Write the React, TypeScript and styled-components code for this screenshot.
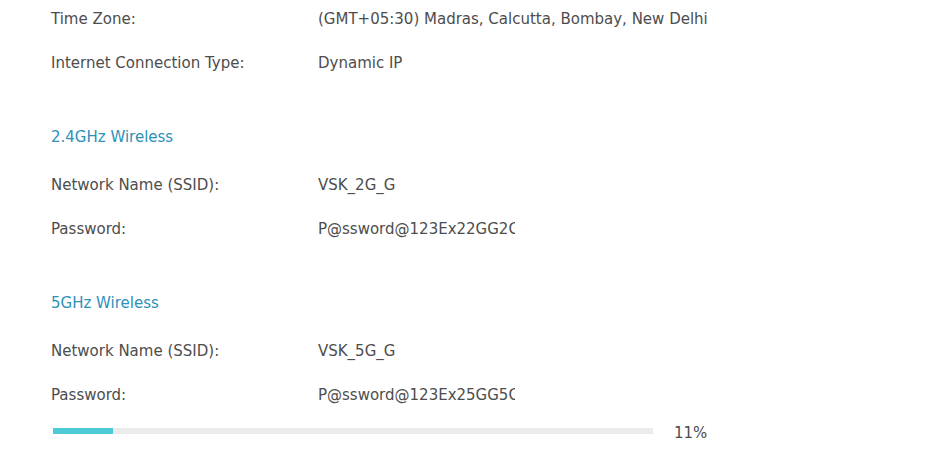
import React from 'react';
import styled, { createGlobalStyle } from 'styled-components';

const GlobalStyle = createGlobalStyle`
  html, body {
    margin: 0;
    padding: 0;
    background: #ffffff;
  }
  body {
    font-family: "DejaVu Sans", Verdana, sans-serif;
    font-size: 15px;
    color: #4d4d4d;
  }
`;

const Page = styled.div`
  width: 937px;
  height: 470px;
  overflow: hidden;
  display: flex;
  flex-direction: column;
  padding: 8px 0 0 51px;
  box-sizing: border-box;
`;

const Section = styled.section<{ $gap?: number }>`
  display: flex;
  flex-direction: column;
  margin-top: ${(p) => p.$gap ?? 0}px;
`;

const SectionTitle = styled.h3`
  margin: 0 0 26px;
  height: 22px;
  line-height: 22px;
  font-size: 15px;
  font-weight: normal;
  color: #2d91b8;
`;

const Row = styled.div`
  display: grid;
  grid-template-columns: 267px auto;
  height: 22px;
  line-height: 22px;
  margin-bottom: 22px;
`;

const Label = styled.span`
  white-space: nowrap;
`;

const Value = styled.span<{ $clip?: boolean }>`
  white-space: nowrap;
  overflow: hidden;
  ${(p) => (p.$clip ? 'max-width: 197px;' : '')}
`;

const ProgressRow = styled.div`
  display: flex;
  align-items: center;
  gap: 21px;
  height: 6px;
  padding-left: 2px;
`;

const Track = styled.div`
  flex: none;
  width: 600px;
  height: 6px;
  background: #ebebeb;
`;

const Fill = styled.div`
  height: 100%;
  background: #4ccbd6;
`;

const Percent = styled.span`
  margin-top: 4px;
  color: #4d4d4d;
`;

type Item = { label: string; value: string; clip?: boolean };

const InfoRow: React.FC<Item> = ({ label, value, clip }) => (
  <Row>
    <Label>{label}</Label>
    <Value $clip={clip}>{value}</Value>
  </Row>
);

const general: Item[] = [
  { label: 'Time Zone:', value: '(GMT+05:30) Madras, Calcutta, Bombay, New Delhi' },
  { label: 'Internet Connection Type:', value: 'Dynamic IP' },
];

const wireless = [
  {
    title: '2.4GHz Wireless',
    items: [
      { label: 'Network Name (SSID):', value: 'VSK_2G_G' },
      { label: 'Password:', value: 'P@ssword@123Ex22GG2G', clip: true },
    ],
  },
  {
    title: '5GHz Wireless',
    items: [
      { label: 'Network Name (SSID):', value: 'VSK_5G_G' },
      { label: 'Password:', value: 'P@ssword@123Ex25GG5G', clip: true },
    ],
  },
];

const progress = 10;

export default function App() {
  return (
    <>
      <GlobalStyle />
      <Page>
        <Section>
          {general.map((it) => (
            <InfoRow key={it.label} {...it} />
          ))}
        </Section>
        {wireless.map((band) => (
          <Section key={band.title} $gap={30}>
            <SectionTitle>{band.title}</SectionTitle>
            {band.items.map((it) => (
              <InfoRow key={it.label} {...it} />
            ))}
          </Section>
        ))}
        <ProgressRow>
          <Track>
            <Fill style={{ width: `${progress}%` }} />
          </Track>
          <Percent>11%</Percent>
        </ProgressRow>
      </Page>
    </>
  );
}
